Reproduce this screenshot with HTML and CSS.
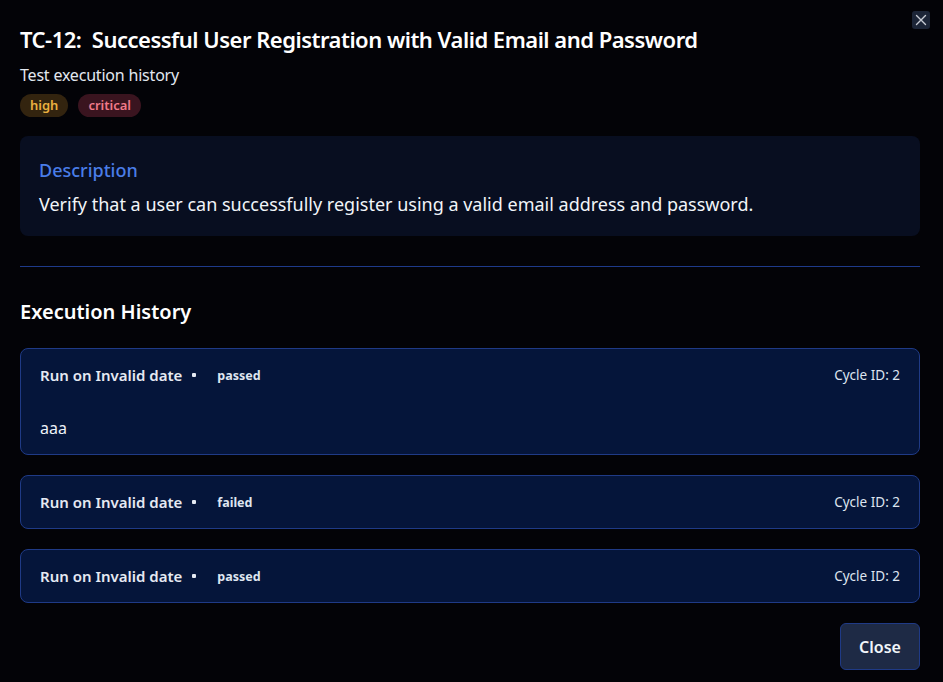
FILE: index.html
```html
<!DOCTYPE html>
<html lang="en">
<head>
<meta charset="utf-8">
<title>TC-12</title>
<link rel="stylesheet" href="styles.css">
</head>
<body>
<div class="modal">
  <button class="x-btn" aria-label="Close">
    <svg width="12" height="12" viewBox="0 0 12 12"><path d="M1.5 1.5L10.5 10.5M10.5 1.5L1.5 10.5" stroke="#c7cbd3" stroke-width="1.4" stroke-linecap="round"/></svg>
  </button>
  <header class="head">
    <h1 class="title">TC-12:&nbsp; Successful User Registration with Valid Email and Password</h1>
    <p class="subtitle">Test execution history</p>
    <div class="badges">
      <span class="badge badge-high">high</span>
      <span class="badge badge-critical">critical</span>
    </div>
  </header>
  <section class="desc">
    <h3 class="desc-title">Description</h3>
    <p class="desc-text">Verify that a user can successfully register using a valid email address and password.</p>
  </section>
  <div class="divider"></div>
  <h2 class="section-title">Execution History</h2>
  <div class="runs">
    <div class="run">
      <div class="run-head">
        <div class="run-left"><span class="run-name">Run on Invalid date</span><span class="dot"></span><span class="status">passed</span></div>
        <span class="cycle">Cycle ID: 2</span>
      </div>
      <p class="run-note">aaa</p>
    </div>
    <div class="run">
      <div class="run-head">
        <div class="run-left"><span class="run-name">Run on Invalid date</span><span class="dot"></span><span class="status">failed</span></div>
        <span class="cycle">Cycle ID: 2</span>
      </div>
    </div>
    <div class="run">
      <div class="run-head">
        <div class="run-left"><span class="run-name">Run on Invalid date</span><span class="dot"></span><span class="status">passed</span></div>
        <span class="cycle">Cycle ID: 2</span>
      </div>
    </div>
  </div>
  <div class="footer">
    <button class="close-btn">Close</button>
  </div>
</div>
</body>
</html>
```

FILE: styles.css
```css
* { box-sizing: border-box; }
html, body { margin: 0; padding: 0; background: #030307; }
body {
  font-family: "Noto Sans", "Open Sans", sans-serif;
  color: #f1f5f9;
  width: 943px;
  height: 682px;
  overflow: hidden;
}
.modal {
  position: relative;
  padding: 24px 23px 12px 20px;
}
.x-btn {
  position: absolute;
  top: 11px;
  right: 13px;
  width: 18px;
  height: 18px;
  border: none;
  border-radius: 3px;
  background: #1c2537;
  padding: 0;
  display: flex;
  align-items: center;
  justify-content: center;
}
.title {
  margin: 0;
  font-size: 22px;
  line-height: 30px;
  font-weight: 600;
  color: #ffffff;
  letter-spacing: -0.5px;
}
.subtitle {
  margin: 10px 0 0;
  font-size: 16px;
  line-height: 22px;
  color: #e2e8f0;
  letter-spacing: -0.2px;
}
.badges { display: flex; gap: 10px; margin-top: 8px; }
.badge {
  font-size: 13px;
  font-weight: 600;
  line-height: 23px;
  height: 23px;
  padding: 0 10px;
  border-radius: 12px;
}
.badge-high { background: #33240f; color: #eab040; }
.badge-critical { background: #3a141f; color: #f07a8a; }
.desc {
  margin-top: 19px;
  background: #080e20;
  border-radius: 8px;
  padding: 22px 19px 19px;
}
.desc-title {
  margin: 0;
  font-size: 18px;
  line-height: 24px;
  font-weight: 500;
  color: #4a7de8;
}
.desc-text {
  margin: 9px 0 0;
  font-size: 18px;
  line-height: 26px;
  color: #f1f5f9;
}
.divider {
  margin-top: 30px;
  height: 1px;
  background: #1e3a8a;
}
.section-title {
  margin: 31px 0 0;
  font-size: 20px;
  line-height: 28px;
  font-weight: 600;
  color: #ffffff;
}
.runs { display: flex; flex-direction: column; gap: 20px; margin-top: 22px; }
.run {
  background: #05153a;
  border: 1px solid #1f3a86;
  border-radius: 8px;
  padding: 15px 19px;
}
.run-head { display: flex; justify-content: space-between; align-items: center; height: 22px; }
.run-left { display: flex; align-items: center; }
.run-name { font-size: 15px; font-weight: 600; color: #e5e9f2; line-height: 22px; }
.dot {
  width: 4px;
  height: 4px;
  border-radius: 1px;
  background: #e5e9f2;
  margin: 0 21px 0 10px;
}
.status { font-size: 12.5px; font-weight: 700; color: #dfe5f0; }
.cycle { font-size: 13.5px; color: #dfe5f0; }
.run-note { margin: 31px 0 0; font-size: 16px; line-height: 22px; color: #eef2f8; }
.footer { display: flex; justify-content: flex-end; margin-top: 20px; }
.close-btn {
  font-family: inherit;
  font-size: 16px;
  font-weight: 600;
  color: #f1f5f9;
  background: #1e2a45;
  border: 1px solid #1f3a86;
  border-radius: 6px;
  width: 80px;
  height: 47px;
}
```
